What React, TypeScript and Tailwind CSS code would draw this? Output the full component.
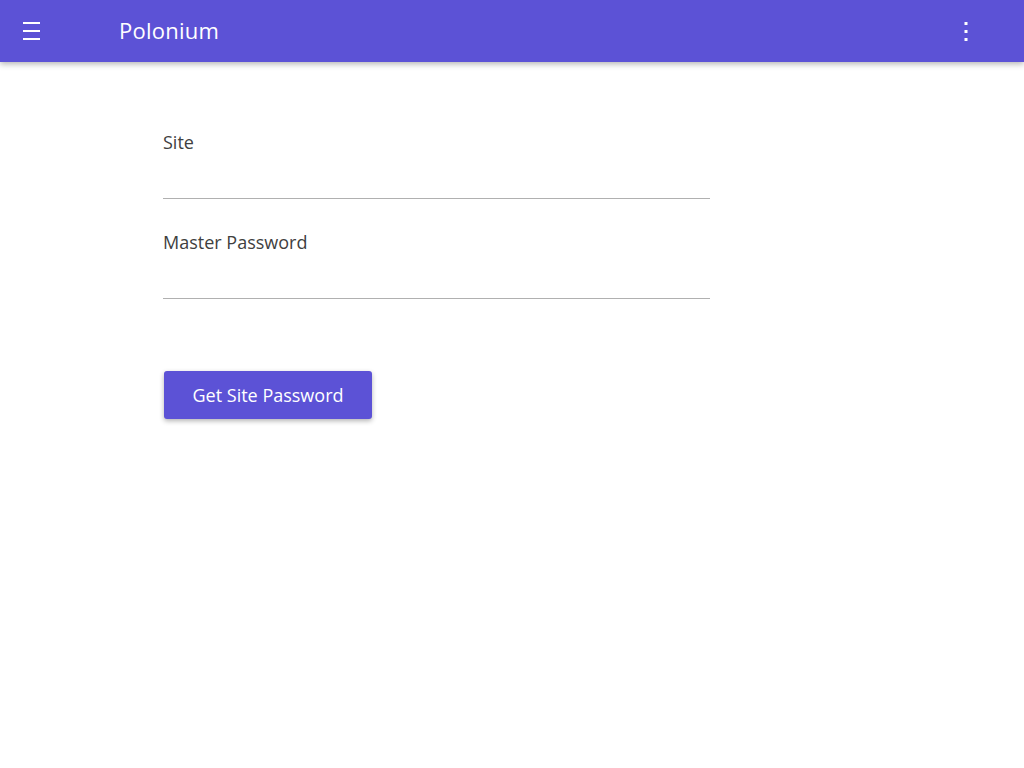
export default function App() {
  return (
    <div className="min-h-screen bg-white font-['Open_Sans',sans-serif]">
      {/* Toolbar */}
      <header className="h-[62px] bg-[#5c52d6] flex items-center text-white shadow-[0_2px_6px_rgba(0,0,0,0.3)] relative z-10">
        <button className="w-[62px] h-[62px] flex items-center justify-center">
          <svg width="20" height="20" viewBox="0 0 20 20" fill="none">
            <path d="M2 2h17M2 10h17M2 18h17" stroke="white" strokeWidth="2" />
          </svg>
        </button>
        <h1 className="ml-[57px] -mt-[2px] text-[22px] leading-none tracking-[0.25px]">Polonium</h1>
        <button className="ml-auto mr-[48px] w-[20px] h-[62px] flex items-center justify-center">
          <svg width="4" height="20" viewBox="0 0 4 20" fill="white">
            <rect x="0.5" y="1" width="3" height="3" />
            <rect x="0.5" y="9" width="3" height="3" />
            <rect x="0.5" y="17" width="3" height="3" />
          </svg>
        </button>
      </header>

      {/* Form */}
      <main className="pl-[163px] pt-[68px]">
        <div className="w-[547px]">
          <label className="block">
            <span className="block text-[18px] leading-[25px] text-[#404040]">Site</span>
            <input
              type="text"
              className="block w-full h-[44px] border-b border-[#b0b0b0] outline-none text-[18px] text-[#333]"
            />
          </label>
          <label className="block mt-[31px]">
            <span className="block text-[18px] leading-[25px] text-[#404040]">Master Password</span>
            <input
              type="password"
              className="block w-full h-[44px] border-b border-[#b0b0b0] outline-none text-[18px] text-[#333]"
            />
          </label>
        </div>
        <button className="mt-[72px] ml-px w-[208px] h-[48px] rounded-[3px] bg-[#5c52d6] text-white text-[18px] shadow-[0_2px_5px_rgba(0,0,0,0.3)]">
          Get Site Password
        </button>
      </main>
    </div>
  )
}
